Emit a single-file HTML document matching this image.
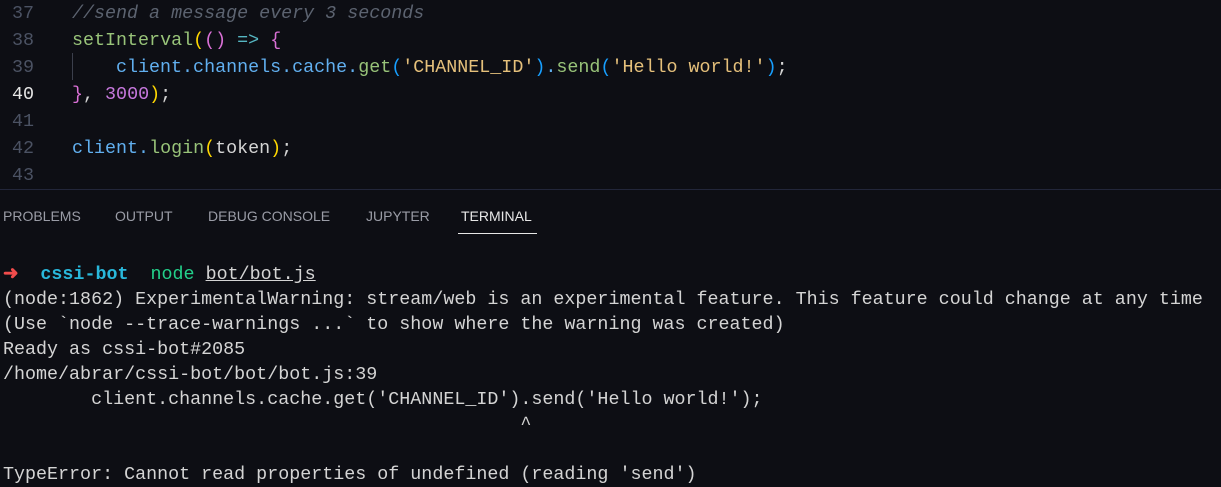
<!DOCTYPE html>
<html><head><style>
body{margin:0;width:1221px;height:481px;background:#0d0e14;overflow:hidden;position:relative;font-family:"Liberation Mono",monospace;}
.l{position:absolute;white-space:pre;font-size:18.35px;line-height:27px;}
.n{position:absolute;width:34px;text-align:right;color:#4b5263;font-size:18.35px;line-height:27px;left:0;}
.c{left:72px;}
.t{position:absolute;white-space:pre;font-size:18.35px;line-height:25px;left:3px;color:#d4d4d4;}
.tab{position:absolute;top:208px;font-family:"Liberation Sans",sans-serif;font-size:14px;color:#9a9ca6;}
</style></head><body>
<div class="n" style="top:0px">37</div>
<div class="n" style="top:27px">38</div>
<div class="n" style="top:54px">39</div>
<div class="n" style="top:81px;color:#e6e6e6">40</div>
<div class="n" style="top:108px">41</div>
<div class="n" style="top:135px">42</div>
<div class="n" style="top:162px">43</div>
<div class="l c" style="top:0px;color:#5c6370;font-style:italic">//send a message every 3 seconds</div>
<div class="l c" style="top:27px"><span style="color:#98c379">setInterval</span><span style="color:#ffd700">(</span><span style="color:#da70d6">()</span><span style="color:#56b6c2"> =&gt; </span><span style="color:#da70d6">{</span></div>
<div style="position:absolute;left:72px;top:53px;width:1px;height:27px;background:#3b3f4c"></div>
<div class="l" style="top:54px;left:116px"><span style="color:#61afef">client.channels.cache.</span><span style="color:#98c379">get</span><span style="color:#179fff">(</span><span style="color:#e5c07b">'CHANNEL_ID'</span><span style="color:#179fff">)</span><span style="color:#61afef">.</span><span style="color:#98c379">send</span><span style="color:#179fff">(</span><span style="color:#e5c07b">'Hello world!'</span><span style="color:#179fff">)</span><span style="color:#d4d4d4">;</span></div>
<div class="l c" style="top:81px"><span style="color:#da70d6">}</span><span style="color:#d4d4d4">, </span><span style="color:#c678dd">3000</span><span style="color:#ffd700">)</span><span style="color:#d4d4d4">;</span></div>
<div class="l c" style="top:135px"><span style="color:#61afef">client.</span><span style="color:#98c379">login</span><span style="color:#ffd700">(</span><span style="color:#d4d4d4">token</span><span style="color:#ffd700">)</span><span style="color:#d4d4d4">;</span></div>
<div style="position:absolute;left:0;top:189px;width:1221px;height:1px;background:#22263a"></div>
<div class="tab" style="left:3px">PROBLEMS</div>
<div class="tab" style="left:115px">OUTPUT</div>
<div class="tab" style="left:208px">DEBUG CONSOLE</div>
<div class="tab" style="left:366px">JUPYTER</div>
<div class="tab" style="left:461px;color:#e7e7e7">TERMINAL</div>
<div style="position:absolute;left:458px;top:233px;width:79px;height:1px;background:#e7e7e7"></div>
<div class="t" style="top:262px"><span style="color:#f14c4c;font-weight:bold">➜</span>  <span style="color:#29b8db;font-weight:bold">cssi-bot</span>  <span style="color:#23d18b">node</span> <span style="text-decoration:underline">bot/bot.js</span></div>
<div class="t" style="top:287px">(node:1862) ExperimentalWarning: stream/web is an experimental feature. This feature could change at any time</div>
<div class="t" style="top:312px">(Use `node --trace-warnings ...` to show where the warning was created)</div>
<div class="t" style="top:337px">Ready as cssi-bot#2085</div>
<div class="t" style="top:362px">/home/abrar/cssi-bot/bot/bot.js:39</div>
<div class="t" style="top:387px">        client.channels.cache.get('CHANNEL_ID').send('Hello world!');</div>
<div class="t" style="top:412px">                                               ^</div>
<div class="t" style="top:462px">TypeError: Cannot read properties of undefined (reading 'send')</div>
</body></html>
